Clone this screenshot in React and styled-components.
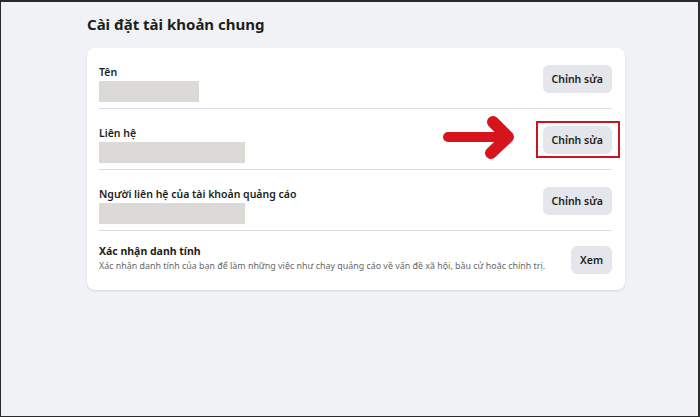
import React from "react";
import styled, { createGlobalStyle } from "styled-components";

const GlobalStyle = createGlobalStyle`
  html, body {
    margin: 0;
    padding: 0;
  }
  body {
    font-family: "Noto Sans", "Open Sans", "Liberation Sans", sans-serif;
    color: #1c1e21;
  }
`;

const Frame = styled.div`
  box-sizing: border-box;
  width: 700px;
  height: 417px;
  background: #f0f2f5;
  border-style: solid;
  border-color: #2b2b2b;
  border-width: 2px 2px 1px 1px;
  padding: 11px 0 0 86px;
  overflow: hidden;
`;

const Title = styled.h2`
  margin: 0;
  font-size: 15px;
  line-height: 22px;
  font-weight: 700;
  color: #1c1e21;
`;

const Card = styled.div`
  margin-top: 13px;
  width: 538px;
  box-sizing: border-box;
  background: #fff;
  border-radius: 8px;
  padding: 0 13px 0 12px;
  box-shadow: 0 1px 2px rgba(0, 0, 0, 0.12);
`;

const Row = styled.div`
  position: relative;
  display: flex;
  justify-content: space-between;
  align-items: flex-start;
  padding: ${({ $last }) => ($last ? "12px 0 16px" : "16px 0 6px")};
  border-bottom: ${({ $last }) => ($last ? "none" : "1px solid #dadde1")};
`;

const Info = styled.div`
  display: flex;
  flex-direction: column;
  min-width: 0;
`;

const Label = styled.div`
  font-size: ${({ $big }) => ($big ? "10.5px" : "10.5px")};
  line-height: 16px;
  font-weight: ${({ $big }) => ($big ? 700 : 600)};
  color: #1c1e21;
`;

const Hint = styled.div`
  font-size: 8.9px;
  line-height: 14px;
  color: #65676b;
  white-space: nowrap;
`;

const Redacted = styled.div`
  margin-top: 1px;
  width: ${({ $w }) => $w}px;
  height: 21px;
  background: #dcdad7;
`;

const Button = styled.button`
  position: relative;
  flex-shrink: 0;
  margin-top: ${({ $offset }) => $offset}px;
  height: 28px;
  padding: 0 9px;
  border: none;
  border-radius: 6px;
  background: #e4e6eb;
  color: #1c1e21;
  font-family: inherit;
  font-size: 10.5px;
  font-weight: 600;
  cursor: pointer;

  ${({ $marked }) =>
    $marked &&
    `
    &::after {
      content: "";
      position: absolute;
      top: -5px;
      bottom: -4px;
      left: -7px;
      right: -8px;
      border: 2px solid #c9151e;
    }
  `}
`;

const Arrow = styled.svg`
  position: absolute;
  left: 338px;
  top: 0;
  width: 84px;
  height: 56px;
`;

function RedArrow() {
  return (
    <Arrow viewBox="0 0 84 56">
      <g fill="none" stroke="#d5151b" strokeLinecap="round" strokeLinejoin="round">
        <path d="M11 28 L66 28" strokeWidth="10" />
        <path d="M56 13 L71 28 L54 44" strokeWidth="12" />
      </g>
    </Arrow>
  );
}

const rows = [
  { label: "Tên", width: 100 },
  { label: "Liên hệ", width: 146, marked: true },
  { label: "Người liên hệ của tài khoản quảng cáo", width: 146 },
];

export default function App() {
  return (
    <>
      <GlobalStyle />
      <Frame>
        <Title>Cài đặt tài khoản chung</Title>
        <Card>
          {rows.map((r) => (
            <Row key={r.label}>
              <Info>
                <Label>{r.label}</Label>
                <Redacted $w={r.width} />
              </Info>
              {r.marked && <RedArrow />}
              <Button $offset={1} $marked={r.marked}>
                Chỉnh sửa
              </Button>
            </Row>
          ))}
          <Row $last>
            <Info>
              <Label $big>Xác nhận danh tính</Label>
              <Hint>
                Xác nhận danh tính của bạn để làm những việc như chạy quảng cáo về vấn đề xã hội, bầu cử hoặc chính trị.
              </Hint>
            </Info>
            <Button $offset={3}>Xem</Button>
          </Row>
        </Card>
      </Frame>
    </>
  );
}
